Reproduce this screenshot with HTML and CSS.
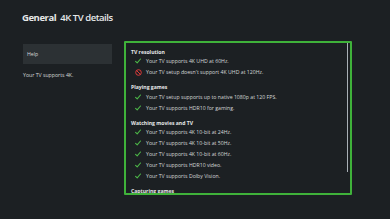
FILE: index.html
```html
<!DOCTYPE html>
<html lang="en">
<head>
<meta charset="utf-8">
<title>General 4K TV details</title>
<link rel="stylesheet" href="styles.css">
</head>
<body>
<header class="header">
  <h1 class="title"><span class="title-strong">General</span> <span class="title-light">4K TV details</span></h1>
</header>
<main class="main">
  <aside class="side">
    <div class="help">Help</div>
    <p class="side-note">Your TV supports 4K.</p>
  </aside>
  <section class="panel">
    <div class="panel-content">
      <h2 class="group-title first">TV resolution</h2>
      <div class="item"><svg class="icon" viewBox="0 0 6 6"><path d="M0.6 3.4 L2.2 4.9 L5.5 1.0" fill="none" stroke="#4cb648" stroke-width="1.1" stroke-linecap="round" stroke-linejoin="round"/></svg><span>Your TV supports 4K UHD at 60Hz.</span></div>
      <div class="item"><svg class="icon icon-no" viewBox="0 0 8 8"><circle cx="4" cy="4" r="3.2" fill="none" stroke="#e23b3b" stroke-width="1.1"/><path d="M1.8 1.8 L6.2 6.2" stroke="#e23b3b" stroke-width="1.1"/></svg><span>Your TV setup doesn't support 4K UHD at 120Hz.</span></div>
      <h2 class="group-title">Playing games</h2>
      <div class="item"><svg class="icon" viewBox="0 0 6 6"><path d="M0.6 3.4 L2.2 4.9 L5.5 1.0" fill="none" stroke="#4cb648" stroke-width="1.1" stroke-linecap="round" stroke-linejoin="round"/></svg><span>Your TV setup supports up to native 1080p at 120 FPS.</span></div>
      <div class="item"><svg class="icon" viewBox="0 0 6 6"><path d="M0.6 3.4 L2.2 4.9 L5.5 1.0" fill="none" stroke="#4cb648" stroke-width="1.1" stroke-linecap="round" stroke-linejoin="round"/></svg><span>Your TV supports HDR10 for gaming.</span></div>
      <h2 class="group-title">Watching movies and TV</h2>
      <div class="item"><svg class="icon" viewBox="0 0 6 6"><path d="M0.6 3.4 L2.2 4.9 L5.5 1.0" fill="none" stroke="#4cb648" stroke-width="1.1" stroke-linecap="round" stroke-linejoin="round"/></svg><span>Your TV supports 4K 10-bit at 24Hz.</span></div>
      <div class="item"><svg class="icon" viewBox="0 0 6 6"><path d="M0.6 3.4 L2.2 4.9 L5.5 1.0" fill="none" stroke="#4cb648" stroke-width="1.1" stroke-linecap="round" stroke-linejoin="round"/></svg><span>Your TV supports 4K 10-bit at 50Hz.</span></div>
      <div class="item"><svg class="icon" viewBox="0 0 6 6"><path d="M0.6 3.4 L2.2 4.9 L5.5 1.0" fill="none" stroke="#4cb648" stroke-width="1.1" stroke-linecap="round" stroke-linejoin="round"/></svg><span>Your TV supports 4K 10-bit at 60Hz.</span></div>
      <div class="item"><svg class="icon" viewBox="0 0 6 6"><path d="M0.6 3.4 L2.2 4.9 L5.5 1.0" fill="none" stroke="#4cb648" stroke-width="1.1" stroke-linecap="round" stroke-linejoin="round"/></svg><span>Your TV supports HDR10 video.</span></div>
      <div class="item"><svg class="icon" viewBox="0 0 6 6"><path d="M0.6 3.4 L2.2 4.9 L5.5 1.0" fill="none" stroke="#4cb648" stroke-width="1.1" stroke-linecap="round" stroke-linejoin="round"/></svg><span>Your TV supports Dolby Vision.</span></div>
      <h2 class="group-title">Capturing games</h2>
    </div>
    <div class="scrollbar"></div>
  </section>
</main>
</body>
</html>
```

FILE: styles.css
```css
html, body {
  margin: 0;
  padding: 0;
}
body {
  width: 390px;
  height: 219px;
  overflow: hidden;
  background: #1c2023;
  color: #d6d8d9;
  font-family: "Open Sans", "Noto Sans", sans-serif;
}
.header {
  padding: 10.5px 0 0 22px;
  height: 41px;
  box-sizing: border-box;
}
.title {
  margin: 0;
  font-size: 9.5px;
  line-height: 13px;
  color: #e6e8e9;
  font-weight: 600;
  letter-spacing: -0.45px;
}
.title-strong {
  font-weight: 700;
}
.title-light {
  font-weight: 600;
  margin-left: 2px;
}
.main {
  display: flex;
  gap: 12px;
  padding-left: 23px;
}
.side {
  width: 89px;
  padding-top: 3px;
}
.help {
  height: 20px;
  background: #2c3134;
  font-size: 5.2px;
  line-height: 20px;
  padding-left: 4px;
  color: #d6d8d9;
}
.side-note {
  margin: 6px 0 0 0;
  font-size: 5.2px;
  line-height: 10px;
  color: #d6d8d9;
}
.panel {
  width: 228px;
  height: 154px;
  box-sizing: border-box;
  border: 2px solid #3fb23a;
  border-radius: 1px;
  display: flex;
  overflow: hidden;
}
.panel-content {
  flex: 1;
  padding: 4.7px 0 0 5px;
  overflow: hidden;
}
.group-title {
  margin: 5.5px 0 0 0;
  font-size: 5.1px;
  line-height: 8px;
  font-weight: 700;
  color: #e6e8e9;
}
.group-title.first {
  margin-top: 0;
}
.item {
  display: flex;
  align-items: center;
  gap: 5px;
  height: 11px;
  padding-left: 4px;
  font-size: 5.2px;
  color: #d6d8d9;
  white-space: nowrap;
}
.icon {
  width: 6px;
  height: 6px;
  flex: none;
}
.icon-no {
  width: 7px;
  height: 7px;
  margin-left: -0.5px;
  margin-right: -0.5px;
}
.scrollbar {
  width: 1.5px;
  height: 130px;
  margin: -1px 2px 0 0;
  background: #a9b0b6;
  flex: none;
}
```
